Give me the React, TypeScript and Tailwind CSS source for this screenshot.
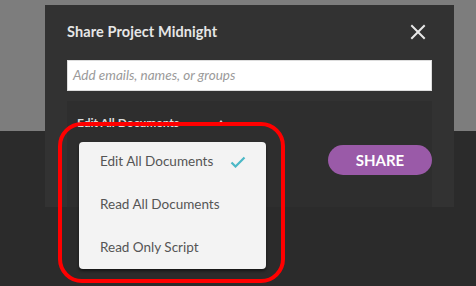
import React from "react";

const items = [
  { label: "Edit All Documents", checked: true },
  { label: "Read All Documents", checked: false },
  { label: "Read Only Script", checked: false },
];

export default function App() {
  return (
    <div className="relative w-[476px] h-[286px] overflow-hidden bg-[#2b2b2b] font-['Lato','Open_Sans',sans-serif]">
      <div className="h-[131px] bg-[#7d7d7d]" />

      {/* modal */}
      <div className="absolute left-[45px] top-[5px] w-[409px] h-[202px] bg-[#323232] flex flex-col px-[22px]">
        <div className="flex items-center justify-between h-[55px] pb-[2px]">
          <span className="text-[#e6e6e6] text-[14.5px] font-bold tracking-[0.1px]">Share Project Midnight</span>
          <svg width="16" height="16" viewBox="0 0 16 16" className="mr-[6px]">
            <path d="M2 2 L14 14 M14 2 L2 14" stroke="#e8e8e8" strokeWidth="2" strokeLinecap="square" />
          </svg>
        </div>
        <div className="h-[31px] bg-white border border-[#ddd] flex items-center px-[5px]">
          <span className="italic text-[#9a9a9a] text-[13.5px]">Add emails, names, or groups</span>
        </div>
        <div className="mt-[10px] flex-1 bg-[#2e2e2e] flex justify-between pl-[10px]">
          <div className="flex items-start gap-[38px] pt-[13px]">
            <span className="text-[#dcdcdc] text-[12px] font-bold">Edit All Documents</span>
            <svg width="8" height="6" viewBox="0 0 8 6" className="mt-[5px]">
              <path d="M0 6 L4 1 L8 6 Z" fill="#d0d0d0" />
            </svg>
          </div>
          <div className="pt-[44px]">
            <button className="w-[104px] h-[30px] rounded-full bg-[#9a5aa8] text-white text-[15px] font-bold">
              SHARE
            </button>
          </div>
        </div>
      </div>

      {/* dropdown */}
      <div className="absolute left-[79px] top-[142px] w-[187px] h-[127px] bg-[#f3f3f3] rounded-[4px] shadow-[0_2px_3px_rgba(0,0,0,0.5)] flex flex-col overflow-hidden">
        {items.map((item) => (
          <div key={item.label} className="h-[43px] shrink-0 flex items-center pb-[4px] pl-[21px] pr-[20px] justify-between">
            <span className="text-[#555] text-[13.5px]">{item.label}</span>
            {item.checked && (
              <svg width="16" height="12" viewBox="0 0 16 12">
                <path d="M1.5 6.5 L5.5 10.5 L14.5 1.5" stroke="#4bb8c6" strokeWidth="2.2" fill="none" />
              </svg>
            )}
          </div>
        ))}
      </div>

      {/* highlight ring */}
      <div className="absolute left-[58px] top-[122px] w-[227px] h-[161px] border-[4px] border-[#f00] rounded-[24px]" />
    </div>
  );
}
